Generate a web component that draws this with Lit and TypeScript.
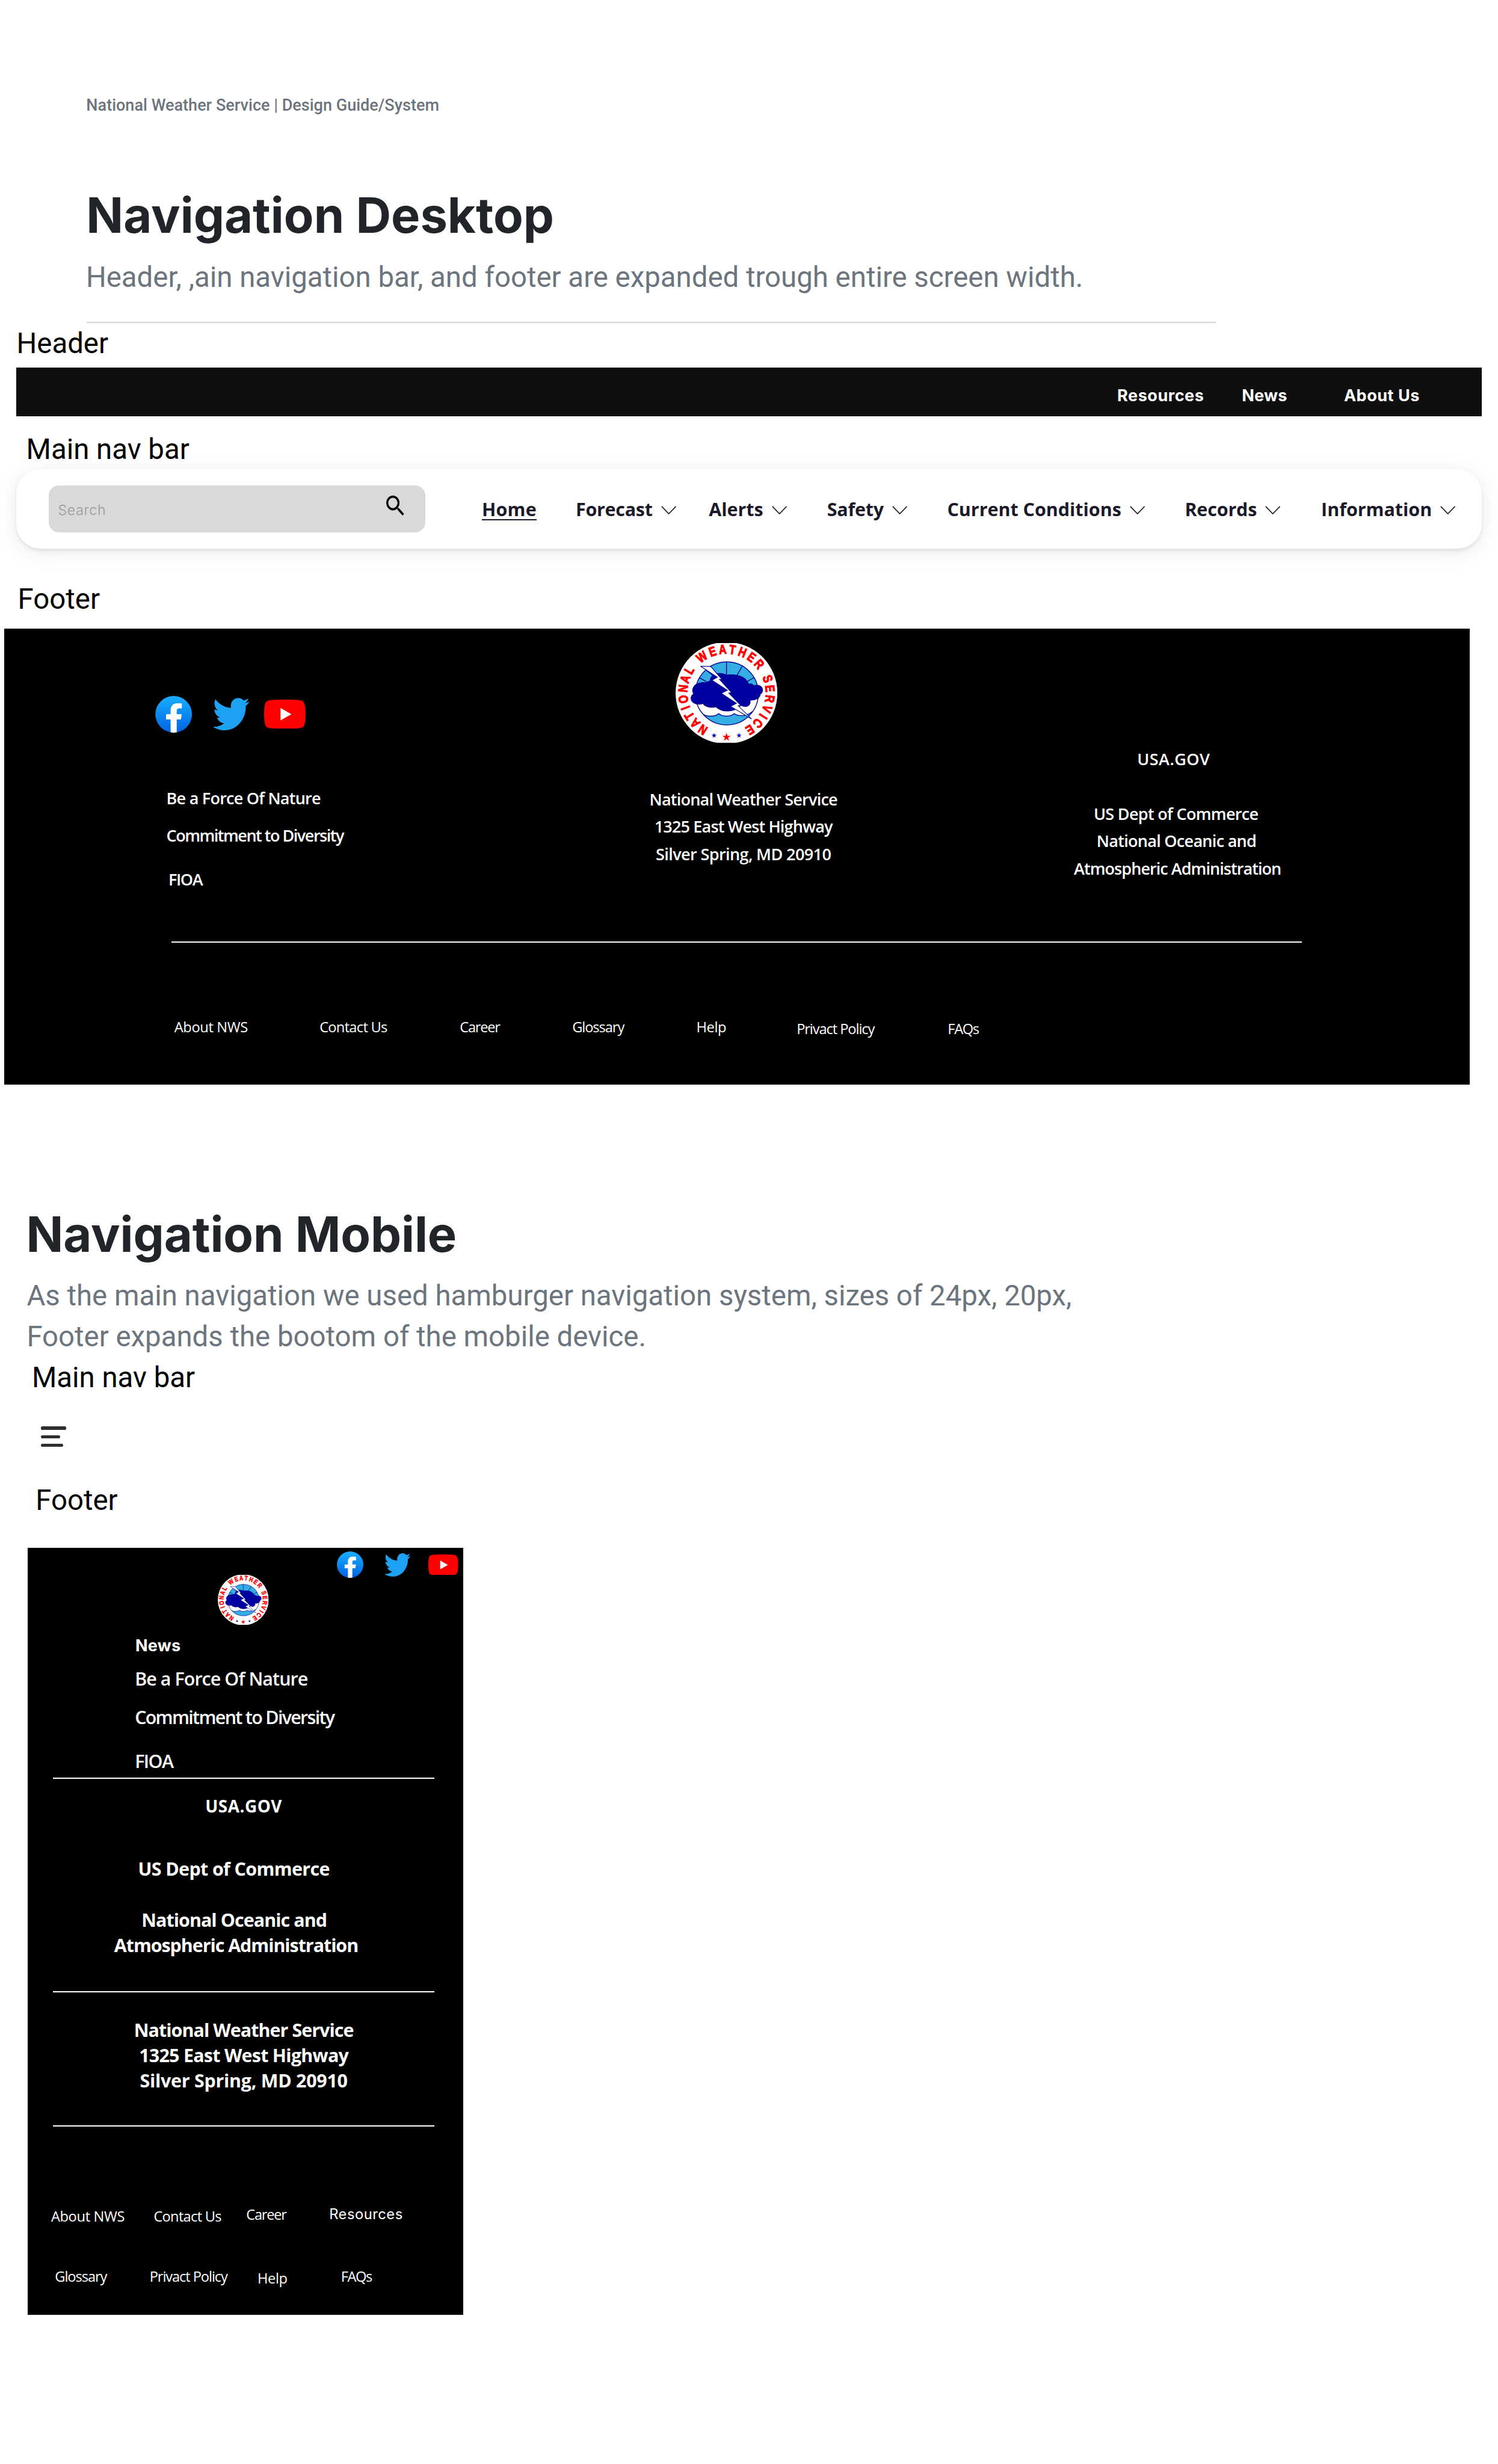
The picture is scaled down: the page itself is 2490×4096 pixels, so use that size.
import { LitElement, html, svg, css } from "lit";
import { customElement, property } from "lit/decorators.js";

type Run = { text: string; ls: number };
const run = (text: string, ls = 0): Run => ({ text, ls });
const spaced = (r: Run, cls = "") =>
  html`<span class=${cls} style="letter-spacing:${r.ls}px">${r.text}</span>`;

const HEADER_LINKS = [run("Resources", 0.6), run("News", 0.2), run("About Us", 0.6)];

const NAV_LINKS = [
  run("Forecast", -0.3),
  run("Alerts"),
  run("Safety", -0.28),
  run("Current Conditions"),
  run("Records", -0.16),
  run("Information"),
];

/* ---------- Icons ---------- */

@customElement("social-icons")
export class SocialIcons extends LitElement {
  static styles = css`
    :host { display: flex; align-items: center; }
    svg { display: block; flex: none; }
    .fb { width: 72.5px; height: 72px; }
    .tw { width: 72px; height: 64px; margin-left: 40.5px; }
    .yt { width: 81.3px; height: 57.3px; margin: -1px 0 0 29px; }
    :host([compact]) .fb { width: 52px; height: 52px; }
    :host([compact]) .tw { width: 51.5px; height: 46px; margin-left: 41px; }
    :host([compact]) .yt { width: 58.5px; height: 41.2px; margin-left: 35px; }
  `;
  render() {
    return html`
      <svg class="fb" viewBox="0 0 72 72">
        <defs>
          <linearGradient id="g" x1="0" y1="0" x2="0" y2="1">
            <stop offset="0" stop-color="#19afff" />
            <stop offset="1" stop-color="#0062e0" />
          </linearGradient>
          <clipPath id="c"><circle cx="36" cy="36" r="36" /></clipPath>
        </defs>
        <circle cx="36" cy="36" r="36" fill="url(#g)" />
        <path
          clip-path="url(#c)"
          fill="#fff"
          d="M30 72V46H21V35.8h9V28c0-9 5.3-13.9 13.6-13.9 3 0 5.8.3 8.5.8v9.3H47.6c-4.5 0-5.6 2.3-5.6 5.3v6.3h9.8L50.3 46H42v26z"
        />
      </svg>
      <svg class="tw" viewBox="1 1 247 201" preserveAspectRatio="none">
        <path
          fill="#1da1f2"
          d="M221.95 51.29c.15 2.17.15 4.34.15 6.53 0 66.73-50.8 143.69-143.69 143.69v-.04c-27.44.04-54.31-7.82-77.41-22.64 3.99.48 8 .72 12.02.73 22.74.02 44.83-7.61 62.72-21.66-21.61-.41-40.56-14.5-47.18-35.07 7.57 1.46 15.37 1.16 22.8-.87-23.56-4.76-40.51-25.46-40.51-49.5v-.64c7.02 3.91 14.88 6.08 22.92 6.32C11.58 63.31 4.74 33.79 18.14 10.71c25.64 31.55 63.47 50.73 104.08 52.76-4.07-17.54 1.49-35.92 14.61-48.25 20.34-19.12 52.33-18.14 71.45 2.19 11.31-2.23 22.15-6.38 32.07-12.26-3.77 11.69-11.66 21.62-22.2 27.93 10.01-1.18 19.79-3.86 29-7.95-6.78 10.16-15.32 19.01-25.2 26.16z"
        />
      </svg>
      <svg class="yt" viewBox="0 3.545 24 16.91">
        <path
          fill="#f00"
          d="M23.498 6.186a3.016 3.016 0 0 0-2.122-2.136C19.505 3.545 12 3.545 12 3.545s-7.505 0-9.377.505A3.017 3.017 0 0 0 .502 6.186C0 8.07 0 12 0 12s0 3.93.502 5.814a3.016 3.016 0 0 0 2.122 2.136c1.871.505 9.376.505 9.376.505s7.505 0 9.377-.505a3.015 3.015 0 0 0 2.122-2.136C24 15.93 24 12 24 12s0-3.93-.502-5.814z"
        />
        <path fill="#fff" d="M9.545 15.568V8.432L15.818 12z" />
      </svg>
    `;
  }
}

/* Clockwise angle of every letter on the seal's ring, measured from the top. */
const RING: [string, number][] = [
  ["N", -147.2], ["A", -133.8], ["T", -121.9], ["I", -110], ["O", -98.4], ["N", -84.2], ["A", -71.3], ["L", -58.6],
  ["W", -34.5], ["E", -18.6], ["A", -5.1], ["T", 7.8], ["H", 21.3], ["E", 35], ["R", 48.7],
  ["S", 71.1], ["E", 84.2], ["R", 97.8], ["V", 111.3], ["I", 122.6], ["C", 134], ["E", 147.5],
];

const star = (cx: number, cy: number, r: number) =>
  Array.from({ length: 10 }, (_, i) => {
    const a = (i * Math.PI) / 5;
    const q = i % 2 ? r * 0.39 : r;
    return `${(cx + q * Math.sin(a)).toFixed(1)},${(cy - q * Math.cos(a)).toFixed(1)}`;
  }).join(" ");

@customElement("nws-seal")
export class NwsSeal extends LitElement {
  static styles = css`
    :host { display: block; }
    svg { display: block; width: 100%; height: 100%; overflow: visible; }
    .ring {
      font: 700 77px "Liberation Sans", Arial, sans-serif;
      fill: #f00;
      stroke: #f00;
      stroke-width: 4;
      text-anchor: middle;
    }
    .line { stroke: #000090; stroke-width: 5; fill: none; }
    .water { fill: #34aee2; }
  `;
  render() {
    return html`
      <svg viewBox="384 102 600 588">
        <defs>
          <clipPath id="frame"><rect x="384" y="102" width="600" height="588" /></clipPath>
          <clipPath id="sky"><rect x="480" y="200" width="410" height="190" /></clipPath>
          <clipPath id="disc"><circle cx="686" cy="399" r="186" /></clipPath>
        </defs>
        <circle cx="684" cy="396" r="300" fill="#fff" clip-path="url(#frame)" />
        <circle cx="686" cy="399" r="186" fill="#34aee2" clip-path="url(#sky)" />
        <g clip-path="url(#disc)">
          <path
            class="line water"
            d="M540 517q14 16 52 16 30 0 46-15 18 15 46 15t46-15q16 12 44 12 30 0 60-22v90H540z"
          />
          <path class="line" d="M684 210v85M779 235l-36 62M848 305l-50 28M522 305l52 30M560 258l50 40" />
        </g>
        <circle class="line" cx="686" cy="399" r="186" />
        <path
          fill="#0000a0"
          stroke="#000088"
          stroke-width="4"
          d="M492 401C474 380 488 340 540 335q22-2 30 1 6-10 18-11c0-32 34-52 75-42q14 2 20 8c60-10 116 8 132 54 12-6 24-2 30 8 30-8 54 4 52 30-2 14-8 16-14 20 0 22-26 38-62 35 8 16-2 38-26 38-14 0-20-2-27-8-20 34-100 52-146 10-30 8-64 0-77-20-30 12-70-2-70-30 0-14 8-22 17-27z"
        />
        <path
          fill="#fff"
          stroke="#000090"
          stroke-width="4"
          stroke-miterlimit="3"
          d="M531 238.5L591 240 658 317 643 316 714 394 698 397 769 470 753 471 832 550 708 475 743 457 653 398 689 380 598 321 630 303z"
        />
        ${RING.map(
          ([ch, a]) =>
            svg`<text class="ring" transform="translate(684 396) rotate(${a}) translate(0 -231) scale(.8 1)">${ch}</text>`
        )}
        <polygon points=${star(611, 647, 16)} fill="#0000c8" />
        <polygon points=${star(684, 657, 26)} fill="#f00" />
        <polygon points=${star(758, 647, 16)} fill="#0000c8" />
      </svg>
    `;
  }
}

/* ---------- Shared styles ---------- */

const shared = css`
  * { box-sizing: border-box; }
  span, div { white-space: nowrap; }
  .link { font: 400 28px/36px "Open Sans", sans-serif; }
  .rule { height: 2.4px; margin-bottom: -0.4px; background: #fff; flex: none; }
`;

/* ---------- Desktop footer ---------- */

@customElement("desktop-footer")
export class DesktopFooter extends LitElement {
  static styles = [
    shared,
    css`
      :host { display: block; width: 2880px; height: 896px; background: #000; color: #fff; }
      .cols {
        display: grid;
        grid-template-columns: 955.5px 838px 430px;
        padding-left: 297.5px;
        height: 614px;
        font: 600 32px/40px "Open Sans", sans-serif;
      }
      .col { display: flex; flex-direction: column; }
      .left { padding-top: 132px; align-items: flex-start; }
      .left span { margin-left: 21.5px; }
      .left .force { margin-top: 108.9px; }
      .left .commit { margin-top: 33.7px; }
      .left .fioa { margin: 45.6px 0 0 25.5px; }
      .mid { padding-top: 28px; width: 400px; line-height: 54px; text-align: center; }
      nws-seal { width: 200px; height: 196px; margin: 0 0 83.9px 67px; }
      .right { padding-top: 229.5px; line-height: 54px; text-align: center; }
      .gov { padding-right: 15px; margin-bottom: 52.8px; }
      .dept { padding-right: 6px; }
      .noaa { padding-right: 4px; }
      .rule { margin-left: 329.5px; width: 2220.5px; }
      .links {
        display: grid;
        grid-template-columns: 285.4px 275.6px 221px 244px 197px 297px auto;
        align-items: start;
        padding: 148.6px 0 0 334.6px;
      }
      .low { margin-top: 3.5px; }
    `,
  ];
  render() {
    return html`
      <div class="cols">
        <div class="col left">
          <social-icons></social-icons>
          ${spaced(run("Be a Force Of Nature", -0.93), "force")}
          ${spaced(run("Commitment to Diversity", -1.78), "commit")}
          ${spaced(run("FIOA", -1.67), "fioa")}
        </div>
        <div class="col mid">
          <nws-seal></nws-seal>
          ${spaced(run("National Weather Service", -0.93))}
          ${spaced(run("1325 East West Highway", -1.02))}
          ${spaced(run("Silver Spring, MD 20910", -0.72))}
        </div>
        <div class="col right">
          ${spaced(run("USA.GOV", 0.55), "gov")}
          ${spaced(run("US Dept of Commerce", -0.83), "dept")}
          ${spaced(run("National Oceanic and", -0.86), "noaa")}
          ${spaced(run("Atmospheric Administration", -1.14))}
        </div>
      </div>
      <div class="rule"></div>
      <div class="links">
        ${spaced(run("About NWS", -0.44), "link")}
        ${spaced(run("Contact Us", -0.86), "link")}
        ${spaced(run("Career", -1.5), "link")}
        ${spaced(run("Glossary", -1.28), "link")}
        ${spaced(run("Help", -0.48), "link")}
        ${spaced(run("Privact Policy", -1.29), "link low")}
        ${spaced(run("FAQs", -1.65), "link low")}
      </div>
    `;
  }
}

/* ---------- Mobile footer ---------- */

@customElement("mobile-footer")
export class MobileFooter extends LitElement {
  static styles = [
    shared,
    css`
      :host {
        display: flex;
        flex-direction: column;
        width: 856px;
        height: 1508px;
        background: #000;
        color: #fff;
        font: 700 36px/50px "Open Sans", sans-serif;
      }
      social-icons { margin: 8px 0 0 608.5px; height: 52px; }
      nws-seal { width: 100px; height: 98px; margin: -6px 0 0 374px; }
      .list { display: flex; flex-direction: column; padding-left: 211px; font-weight: 600; line-height: 48px; }
      .news { font: 700 32px/40px Inter, sans-serif; margin: 21px 0 0 1px; }
      .force { margin-top: 20px; }
      .commit { margin-top: 27.7px; }
      .fioa { margin-top: 38.4px; }
      .rule { margin-left: 50px; width: 750px; }
      .first { margin-top: 8.9px; }
      .block { display: flex; flex-direction: column; text-align: center; width: 850px; }
      .gov { font-size: 33px; line-height: 48px; margin-top: 30.2px; }
      .dept { margin-top: 73.6px; padding-right: 39px; }
      .noaa { margin-top: 50px; padding-right: 38px; }
      .admin { padding-right: 30px; margin-bottom: 66.2px; }
      .address { padding: 48.2px 0 63.8px; }
      .links { display: grid; align-items: start; }
      .one { grid-template-columns: 201.6px 182px 163px auto; padding: 154.4px 0 0 46.4px; }
      .two { grid-template-columns: 186px 212px 164px auto; padding: 81.8px 0 0 54px; }
      .low { margin-top: 3.8px; }
      .res { font-family: Inter, sans-serif; margin-top: 0.6px; }
    `,
  ];
  render() {
    return html`
      <social-icons compact></social-icons>
      <nws-seal></nws-seal>
      <div class="list">
        ${spaced(run("News", 0.26), "news")}
        ${spaced(run("Be a Force Of Nature", -1.11), "force")}
        ${spaced(run("Commitment to Diversity", -2), "commit")}
        ${spaced(run("FIOA", -1.83), "fioa")}
      </div>
      <div class="rule first"></div>
      <div class="block">
        ${spaced(run("USA.GOV", 0.59), "gov")}
        ${spaced(run("US Dept of Commerce", -0.76), "dept")}
        ${spaced(run("National Oceanic and", -1.12), "noaa")}
        ${spaced(run("Atmospheric Administration", -1.24), "admin")}
      </div>
      <div class="rule"></div>
      <div class="block address">
        ${spaced(run("National Weather Service", -1.12))}
        ${spaced(run("1325 East West Highway", -0.88))}
        ${spaced(run("Silver Spring, MD 20910", -0.32))}
      </div>
      <div class="rule"></div>
      <div class="links one">
        ${spaced(run("About NWS", -0.44), "link low")}
        ${spaced(run("Contact Us", -0.86), "link low")}
        ${spaced(run("Career", -1.5), "link")}
        ${spaced(run("Resources", 0.63), "link res")}
      </div>
      <div class="links two">
        ${spaced(run("Glossary", -1.28), "link")}
        ${spaced(run("Privact Policy", -1.29), "link")}
        ${spaced(run("Help", -0.48), "link low")}
        ${spaced(run("FAQs", -1.65), "link")}
      </div>
    `;
  }
}

/* ---------- Main navigation ---------- */

@customElement("main-nav")
export class MainNav extends LitElement {
  @property() placeholder = "Search";
  static styles = [
    shared,
    css`
      :host {
        display: grid;
        grid-template-columns: 850.3px 185.7px 261.5px 232.5px 236px 467px 268px auto;
        align-items: start;
        width: 2880px;
        height: 156px;
        padding-left: 64px;
        box-sizing: border-box;
        border-radius: 48px;
        background: #fff;
        color: #1c1a2a;
        box-shadow: 0 4px 8px rgba(0, 0, 0, 0.08), 0 6px 44px rgba(0, 0, 0, 0.08);
        font: 700 36px/48px "Open Sans", sans-serif;
      }
      .search {
        display: flex;
        align-items: flex-start;
        justify-content: space-between;
        width: 740px;
        height: 92px;
        margin-top: 32px;
        padding: 13.2px 35.4px 0 18px;
        border-radius: 20px;
        background: #d9d9d9;
      }
      .hint { font: 300 27.5px/36px Inter, sans-serif; color: #9a9a9a; margin-top: 17.8px; letter-spacing: 0.8px; }
      .glass { width: 48px; height: 54px; display: block; }
      .item { display: flex; align-items: center; gap: 16.5px; margin: 54.8px 0 0 -0.5px; height: 48px; }
      .home span { border-bottom: 3px solid #1c1a2a; line-height: 39px; height: 41px; }
      .home { align-items: flex-start; margin: 59.3px 0 0 0.7px; }
      .chev { width: 30px; height: 17px; margin-top: 3.5px; display: block; }
    `,
  ];
  render() {
    return html`
      <div class="search">
        <span class="hint">${this.placeholder}</span>
        <svg class="glass" viewBox="0 0 24 24" preserveAspectRatio="none">
          <path
            d="M15.5 14h-.79l-.28-.27A6.471 6.471 0 0 0 16 9.5 6.5 6.5 0 1 0 9.5 16c1.61 0 3.09-.59 4.23-1.57l.27.28v.79l5 4.99L20.49 19l-4.99-5zm-6 0C7.01 14 5 11.99 5 9.5S7.01 5 9.5 5 14 7.01 14 9.5 11.99 14 9.5 14z"
          />
        </svg>
      </div>
      <div class="item home">${spaced(run("Home", 0.3))}</div>
      ${NAV_LINKS.map(
        (l) => html`<div class="item">
          ${spaced(l)}
          <svg class="chev" viewBox="0 0 30 17">
            <path d="M1 1l14 14.5L29 1" fill="none" stroke="#1c1a2a" stroke-width="1.9" />
          </svg>
        </div>`
      )}
    `;
  }
}

/* ---------- Page ---------- */

@customElement("app-root")
export class AppRoot extends LitElement {
  static styles = [
    shared,
    css`
      :host { display: block; background: #fff; }
      .page {
        zoom: 0.8458;
        display: flex;
        flex-direction: column;
        align-items: flex-start;
        width: 2943px;
        height: 4842px;
        padding-top: 187.9px;
        font-family: Roboto, sans-serif;
      }
      .crumb { font-weight: 500; font-size: 32px; line-height: 40px; color: #6c757d; margin-left: 169.5px; }
      h1 { font: 700 96px/116px Inter, sans-serif; color: #212529; margin: 0; }
      .lead { font-size: 56px; line-height: 80px; color: #6c757d; margin: 0; }
      .label { font-size: 56px; line-height: 66px; color: #000; }
      .h-desk { margin: 137.9px 0 0 169.5px; }
      .l-desk { margin: 24.4px 0 0 169px; }
      .divider { width: 2220px; height: 2.4px; background: #ced4da; margin: 45.8px 0 -0.4px 170px; }
      .t-header { margin: 9.2px 0 0 32.5px; }
      .header {
        display: grid;
        grid-template-columns: 245px 200.5px auto;
        justify-content: start;
        width: 2880px;
        height: 96px;
        margin: 12.8px 0 0 32px;
        padding: 35.4px 0 0 2163.7px;
        background: #0f0f0f;
        color: #fff;
        font: 700 32px/40px Inter, sans-serif;
      }
      .t-nav { margin: 33.2px 0 0 51.5px; position: relative; z-index: 1; }
      main-nav { margin: 4.8px 0 0 32px; }
      .t-foot { margin: 67.2px 0 0 35px; }
      desktop-footer { margin: 24.8px 0 0 8px; }
      .h-mob { margin: 236px 0 0 51.5px; letter-spacing: -0.1px; }
      .l-mob { margin: 24.4px 0 0 52.5px; }
      .t-mnav { margin: 7px 0 0 62.6px; }
      .burger { display: flex; flex-direction: column; gap: 11px; margin: 62.6px 0 0 80.4px; }
      .burger i { display: block; height: 6px; border-radius: 3px; background: #2f2f2f; }
      .b1 { width: 50px; }
      .b2 { width: 38px; }
      .b3 { width: 44px; }
      .t-mfoot { margin: 73.1px 0 0 70px; }
      mobile-footer { margin: 58.9px 0 0 54px; }
    `,
  ];
  render() {
    return html`
      <div class="page">
        <div class="crumb">National Weather Service | Design Guide/System</div>
        <h1 class="h-desk">Navigation Desktop</h1>
        <p class="lead l-desk">Header, ,ain navigation bar, and footer are expanded trough entire screen width.</p>
        <div class="divider"></div>
        <div class="label t-header">Header</div>
        <div class="header">${HEADER_LINKS.map((l) => spaced(l))}</div>
        <div class="label t-nav">Main nav bar</div>
        <main-nav></main-nav>
        <div class="label t-foot">Footer</div>
        <desktop-footer></desktop-footer>
        <h1 class="h-mob">Navigation Mobile</h1>
        <p class="lead l-mob">
          As the main navigation we used hamburger navigation system, sizes of 24px, 20px,<br />Footer expands the bootom
          of the mobile device.
        </p>
        <div class="label t-mnav">Main nav bar</div>
        <div class="burger"><i class="b1"></i><i class="b2"></i><i class="b3"></i></div>
        <div class="label t-mfoot">Footer</div>
        <mobile-footer></mobile-footer>
      </div>
    `;
  }
}
